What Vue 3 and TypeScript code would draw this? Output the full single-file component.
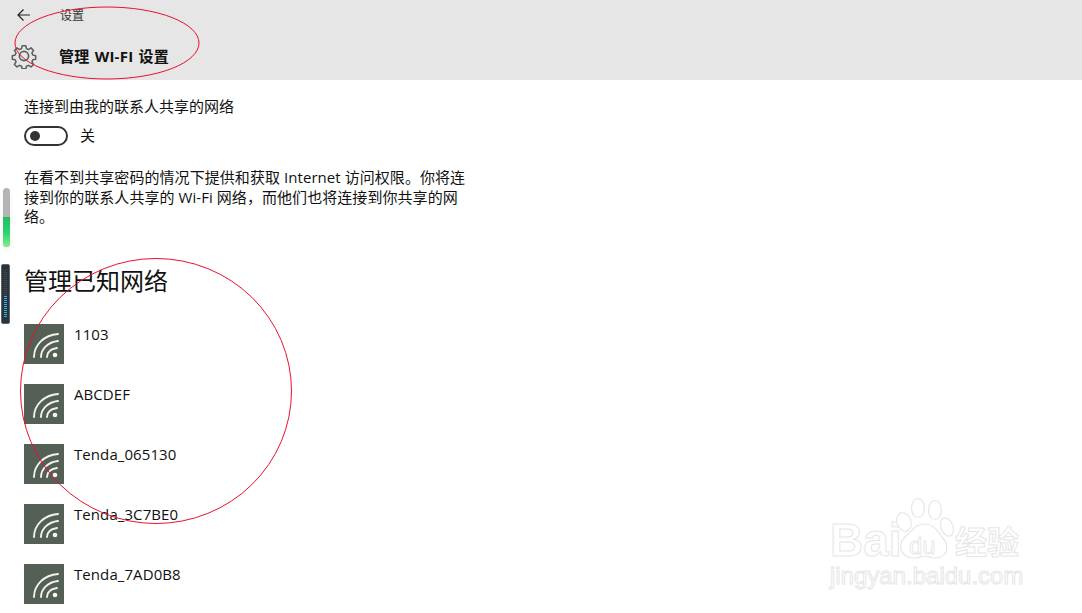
<script setup lang="ts">
const networks: string[] = ['1103', 'ABCDEF', 'Tenda_065130', 'Tenda_3C7BE0', 'Tenda_7AD0B8']
const meterDots: number[] = Array.from({ length: 24 }, (_, i) => i)
</script>

<template>
  <div class="page">
    <header class="header">
      <div class="topline">
        <svg class="back" width="16" height="14" viewBox="0 0 16 14" fill="none" stroke="#222" stroke-width="1.2">
          <path d="M14 7H2M7.5 1.5 2 7l5.5 5.5" />
        </svg>
        <span class="crumb">设置</span>
      </div>
      <div class="titleline">
        <svg class="gear" width="26" height="26" viewBox="0 0 26 26" fill="none" stroke="#56625c" stroke-width="1.700" stroke-linejoin="round">
          <path d="M11 1.6h4l.7 3.2 2.3 1 2.8-1.8 2.8 2.8-1.8 2.8 1 2.3 3.2.7v4l-3.2.7-1 2.3 1.8 2.8-2.8 2.8-2.8-1.8-2.3 1-.7 2.9h-4l-.7-2.9-2.3-1-2.8 1.8-2.8-2.8 1.8-2.8-1-2.3-3.200-.7v-4l3.200-.7 1-2.300-1.800-2.800 2.800-2.800 2.800 1.800 2.300-1z" transform="translate(1.300 1.300) scale(.9)" />
          <circle cx="13" cy="13" r="4.600" />
        </svg>
        <h1 class="title">管理 WI-FI 设置</h1>
      </div>
    </header>

    <main class="content">
      <p class="label">连接到由我的联系人共享的网络</p>
      <div class="toggle-row">
        <span class="toggle"><span class="knob"></span></span>
        <span class="toggle-text">关</span>
      </div>
      <p class="desc">在看不到共享密码的情况下提供和获取 Internet 访问权限。你将连接到你的联系人共享的 Wi-Fi 网络，而他们也将连接到你共享的网络。</p>
      <h2 class="section">管理已知网络</h2>
      <ul class="list">
        <li v-for="n in networks" :key="n" class="item">
          <span class="tile">
            <svg width="40" height="40" viewBox="0 0 40 40" fill="none" stroke="#f2f2ee" stroke-width="1.900" stroke-linecap="round">
              <path d="M10 33C10 21 20 11 34 10" />
              <path d="M17 33C17 25 24 18 34 17" />
              <path d="M23 33C23 28 27 25 33 24" />
              <circle cx="31" cy="31" r="2.300" fill="#f6f6f2" stroke="none" />
            </svg>
          </span>
          <span class="name">{{ n }}</span>
        </li>
      </ul>
    </main>

    <div class="slider">
      <div class="slider-fill"></div>
    </div>
    <div class="meter">
      <span v-for="d in meterDots" :key="d" class="dot" :class="{ lit: d > 12 }"></span>
    </div>

    <svg class="marks" width="1082" height="613" viewBox="0 0 1082 613" fill="none" stroke="#e8112d" stroke-width="1">
      <ellipse cx="107" cy="43" rx="92" ry="36" />
      <ellipse cx="156" cy="391" rx="135.500" ry="132.500" />
    </svg>

    <div class="watermark">
      <div class="wm-top">
        <span class="wm-bai">Bai</span>
        <svg class="paw" width="60" height="64" viewBox="0 0 60 64" fill="#fff" stroke="#e6e6e6" stroke-width="1.200">
          <ellipse cx="9" cy="25" rx="7" ry="9.500" transform="rotate(-20 9 25)" />
          <ellipse cx="23" cy="11" rx="6.500" ry="9.500" />
          <ellipse cx="40" cy="13" rx="6.500" ry="9.500" />
          <ellipse cx="52" cy="30" rx="6" ry="9.500" transform="rotate(-20 52 30)" />
          <path d="M30 27c8 0 12 6 17 13 6 6 9 21-8 21-4 0-6-2-9-2s-6 2-10 2C5 61 2 48 10 40c7-5 9-13 20-13z" />
        </svg>
        <span class="wm-du">du</span>
        <span class="wm-cn">经验</span>
      </div>
      <div class="wm-url">jingyan.baidu.com</div>
    </div>
  </div>
</template>

<style>
html, body { margin: 0; background: #fff; overflow: hidden; }
</style>

<style scoped>
.page {
  position: relative;
  width: 1082px;
  height: 613px;
  overflow: hidden;
  background: #fff;
  color: #111;
  font-family: "Open Sans", "Noto Sans CJK SC", sans-serif;
}
.header {
  height: 80px;
  background: #e6e6e6;
  box-sizing: border-box;
  padding: 7px 0 0 12px;
}
.topline { display: flex; align-items: center; height: 16px; }
.back { margin-left: 4px; }
.crumb { margin-left: 28px; font-size: 12px; color: #333; }
.titleline { display: flex; align-items: center; margin-top: 20px; }
.gear { flex: none; margin-left: -1px; }
.title {
  margin: 0 0 0 22px;
  font-size: 15px;
  font-weight: 700;
  line-height: 22px;
  word-spacing: 1px;
  letter-spacing: .25px;
  color: #111;
}
.content { padding: 0 0 0 24px; }
.label { margin: 16px 0 0; font-size: 15px; line-height: 20px; }
.toggle-row { display: flex; align-items: center; margin-top: 10px; height: 20px; }
.toggle {
  box-sizing: border-box;
  width: 44px;
  height: 20px;
  border: 2px solid #333;
  border-radius: 10px;
  display: flex;
  align-items: center;
  padding-left: 4px;
}
.knob { width: 10px; height: 10px; border-radius: 50%; background: #333; }
.toggle-text { margin-left: 12px; font-size: 15px; line-height: 18px; margin-bottom: 2px; }
.desc {
  margin: 22px 0 0;
  width: 446px;
  font-size: 15px;
  line-height: 19.500px;
  letter-spacing: .06px;
}
.section {
  margin: 38px 0 0;
  font-size: 24px;
  font-weight: 400;
  line-height: 32px;
}
.list { list-style: none; margin: 27px 0 0; padding: 0; }
.item { display: flex; align-items: flex-start; height: 60px; }
.tile { width: 40px; height: 40px; background: #545f56; flex: none; display: block; }
.tile svg { display: block; }
.name { margin: 0 0 0 10px; font-size: 15px; line-height: 20px; letter-spacing: .08px; }
.slider {
  position: absolute;
  left: 3px;
  top: 188px;
  width: 7px;
  height: 59px;
  border-radius: 4px;
  background: #b4b4b4;
  overflow: hidden;
  box-shadow: 0 4px 6px rgba(0, 0, 0, .06);
}
.slider-fill {
  margin-top: 29px;
  height: 30px;
  background: linear-gradient(#1fbf62, #2ed46f 55%, #86ef8a);
}
.meter {
  position: absolute;
  left: 1px;
  top: 264px;
  box-sizing: border-box;
  width: 9px;
  height: 60px;
  background: #2a323a;
  border: 1px solid #5b6670;
  border-radius: 2px;
  padding: 5px 0 0 2px;
  display: flex;
  flex-direction: column;
  gap: 1px;
}
.dot { display: block; flex: none; width: 3px; height: 1px; background: #3f4850; }
.dot.lit { background: #2fb0f5; }
.marks { position: absolute; left: 0; top: 0; pointer-events: none; }
.watermark {
  position: absolute;
  left: 830px;
  top: 497px;
  color: #fff;
  font-family: "Liberation Sans", "Noto Sans CJK SC", sans-serif;
  -webkit-text-stroke: 1px #e6e6e6;
}
.wm-top { position: relative; width: 200px; height: 64px; }
.wm-bai { position: absolute; left: 0; top: 20px; font-size: 46px; line-height: 46px; font-weight: 700; letter-spacing: 0; }
.paw { position: absolute; left: 65px; top: 0; }
.wm-du { position: absolute; left: 79px; top: 36px; font-size: 24px; line-height: 26px; -webkit-text-stroke-width: .8px; }
.wm-cn { position: absolute; left: 125px; top: 26px; font-size: 32px; line-height: 40px; font-weight: 700; }
.wm-url { margin-top: 2px; font-size: 24px; line-height: 26px; letter-spacing: 0; }
</style>
